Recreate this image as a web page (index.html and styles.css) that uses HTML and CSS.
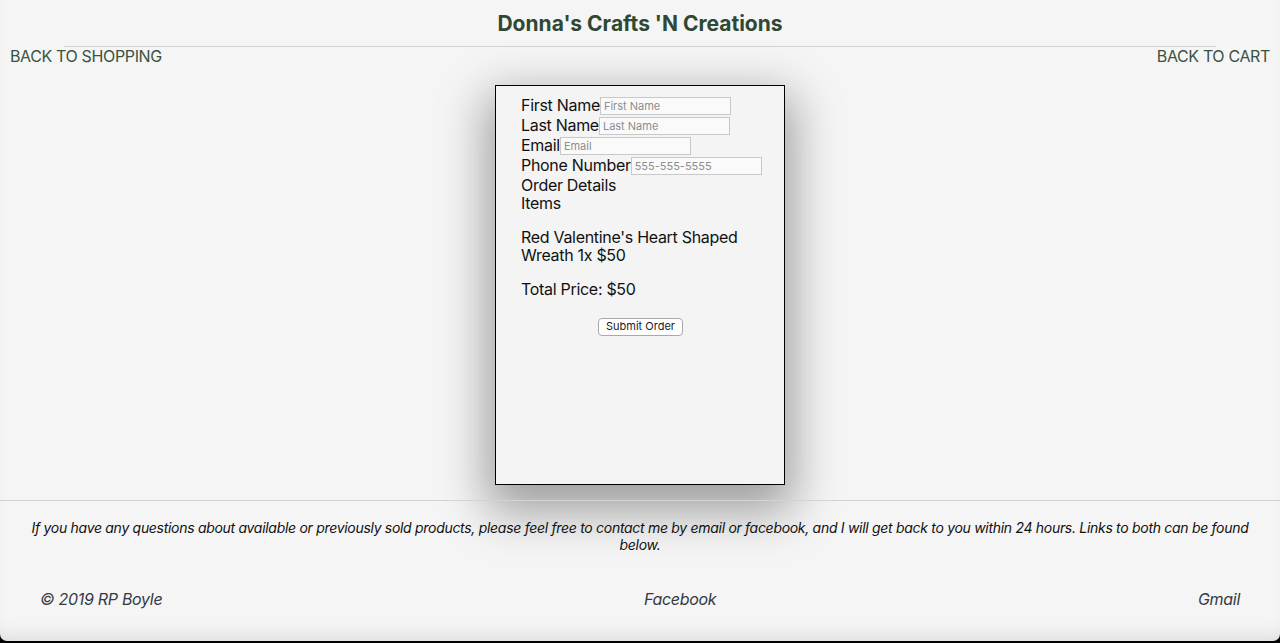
FILE: index.html
```html
<!DOCTYPE html>
<html lang="en">
<head>
<meta charset="utf-8">
<title>Donna's Crafts 'N Creations</title>
<link rel="stylesheet" href="styles.css">
</head>
<body>
<div class="page">
  <header class="header">
    <h1 class="title">Donna's Crafts 'N Creations</h1>
    <nav class="nav">
      <a class="nav-link" href="#">BACK TO SHOPPING</a>
      <a class="nav-link" href="#">BACK TO CART</a>
    </nav>
  </header>
  <main class="main">
    <form class="card">
      <div class="row"><label class="label">First Name</label><input class="field" type="text" placeholder="First Name"></div>
      <div class="row"><label class="label">Last Name</label><input class="field" type="text" placeholder="Last Name"></div>
      <div class="row"><label class="label">Email</label><input class="field" type="text" placeholder="Email"></div>
      <div class="row"><label class="label">Phone Number</label><input class="field" type="text" placeholder="555-555-5555"></div>
      <div class="text first">Order Details</div>
      <div class="text">Items</div>
      <p class="para">Red Valentine's Heart Shaped Wreath 1x $50</p>
      <p class="para">Total Price: $50</p>
      <div class="actions"><button class="submit" type="button">Submit Order</button></div>
    </form>
  </main>
  <footer class="footer">
    <p class="footer-note">If you have any questions about available or previously sold products, please feel free to contact me by email or facebook, and I will get back to you within 24 hours. Links to both can be found below.</p>
    <div class="footer-links">
      <span class="footer-item">© 2019 RP Boyle</span>
      <a class="footer-item" href="#">Facebook</a>
      <a class="footer-item" href="#">Gmail</a>
    </div>
  </footer>
</div>
</body>
</html>
```

FILE: styles.css
```css
html {
  background: #000;
  margin: 0;
  padding: 0;
}
body {
  margin: 0;
  padding: 0;
  font-family: Inter, "Liberation Sans", sans-serif;
  background: #000;
}
.page {
  height: 641px;
  background: #f5f5f5;
  border-radius: 0 0 7px 7px;
  overflow: hidden;
  display: flex;
  flex-direction: column;
  box-shadow: inset 0 -14px 18px -10px rgba(0, 0, 0, 0.1);
}
.header {
  flex: none;
}
.title {
  margin: 0 auto;
  width: 90%;
  padding: 11px 0 9px;
  line-height: 26px;
  font-size: 21px;
  font-weight: 700;
  text-align: center;
  color: #2f4733;
  border-bottom: 1px solid #d3d3d3;
}
.nav {
  display: flex;
  justify-content: space-between;
  padding: 0 10px;
  line-height: 18px;
}
.nav-link {
  color: #3b5240;
  text-decoration: none;
  font-size: 16px;
  letter-spacing: -0.36px;
}
.main {
  flex: none;
  padding: 20px 0 15px;
}
.card {
  box-sizing: border-box;
  width: 290px;
  height: 400px;
  margin: 0 auto;
  border: 1px solid #000;
  background: #f4f4f4;
  padding: 9px 24px 0 25px;
  color: #111;
  font-size: 16px;
  letter-spacing: -0.3px;
  box-shadow: 0 18px 45px 8px rgba(0, 0, 0, 0.36);
}
.row {
  display: flex;
  align-items: center;
  height: 20px;
  line-height: 20px;
}
.label {
  white-space: nowrap;
}
.field {
  box-sizing: border-box;
  width: 131px;
  height: 18px;
  margin: 1px 0 0;
  padding: 0 3px;
  border: 1px solid #c8c8c8;
  background: #fafafa;
  font-family: Inter, "Liberation Sans", sans-serif;
  font-size: 11px;
  letter-spacing: 0;
  color: #333;
}
.field::placeholder {
  color: #8d8d8d;
}
.text {
  line-height: 18px;
}
.first {
  margin-top: 1px;
}
.para {
  margin: 16px 0 0;
  line-height: 18px;
}
.actions {
  text-align: center;
  margin-top: 16px;
}
.submit {
  font-family: Inter, "Liberation Sans", sans-serif;
  font-size: 11px;
  letter-spacing: 0;
  color: #222;
  background: #fff;
  border: 1px solid #a9a9a9;
  border-radius: 4px;
  height: 18px;
  padding: 0 7px;
  line-height: 15px;
}
.footer {
  flex: 1;
  border-top: 1px solid #d3d3d3;
}
.footer-note {
  margin: 0;
  padding: 18px 22px 0;
  font-size: 14px;
  font-style: italic;
  line-height: 17px;
  letter-spacing: -0.3px;
  text-align: center;
  color: #111;
}
.footer-links {
  display: flex;
  justify-content: space-between;
  padding: 36px 40px 0;
  line-height: 20px;
}
.footer-item {
  font-size: 16px;
  font-style: italic;
  letter-spacing: -0.3px;
  color: #333a45;
  text-decoration: none;
}
```
